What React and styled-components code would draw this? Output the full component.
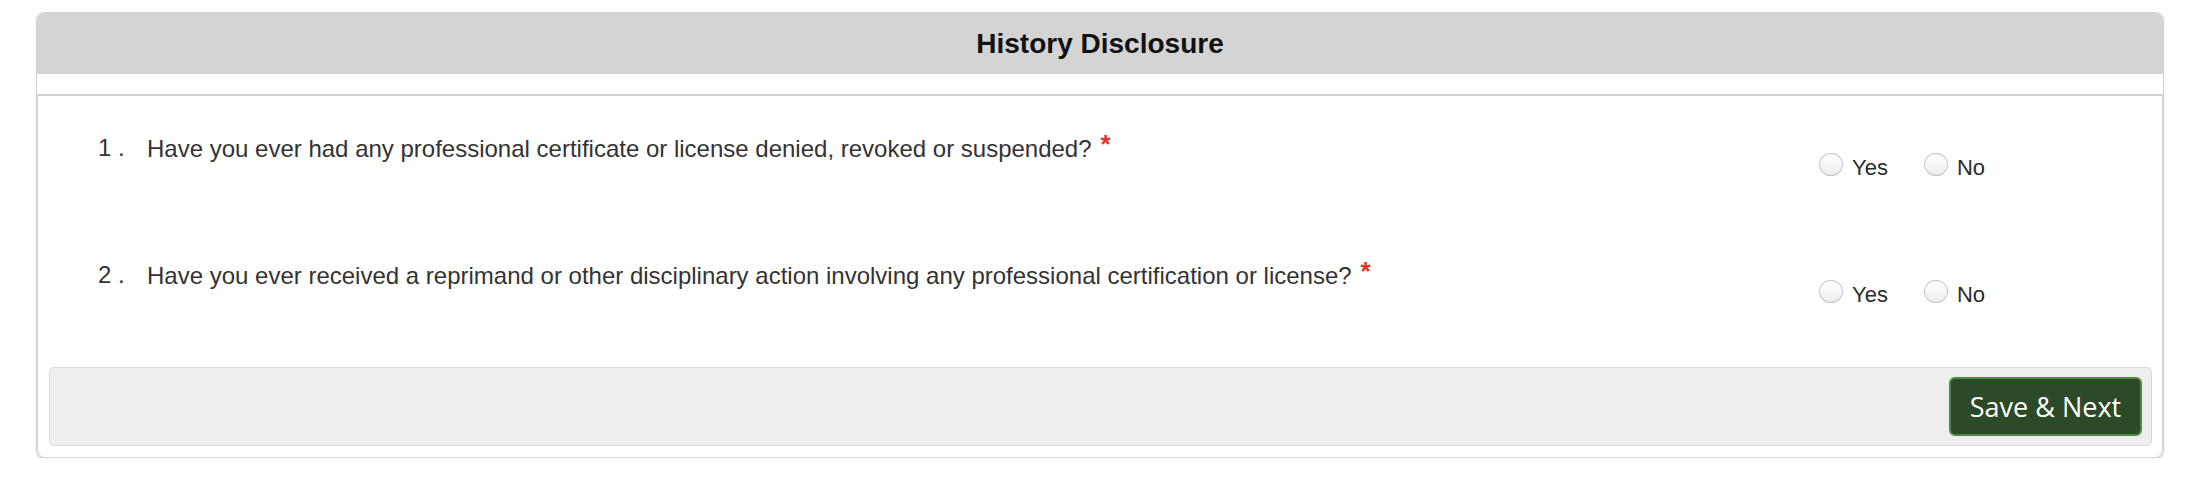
import React from 'react';
import styled, { createGlobalStyle } from 'styled-components';

const questions = [
  'Have you ever had any professional certificate or license denied, revoked or suspended?',
  'Have you ever received a reprimand or other disciplinary action involving any professional certification or license?',
];

export default function App() {
  return (
    <>
      <GlobalStyle />
      <Card>
        <Header>History Disclosure</Header>
        <Gap />
        <Body>
          {questions.map((q, i) => (
            <Row key={i}>
              <Number>{i + 1} .</Number>
              <Question>
                {q}
                <Required>*</Required>
              </Question>
              <Options>
                <Option>
                  <Radio type="radio" name={'q' + i} />
                  <span>Yes</span>
                </Option>
                <Option>
                  <Radio type="radio" name={'q' + i} />
                  <span>No</span>
                </Option>
              </Options>
            </Row>
          ))}
          <Footer>
            <SaveButton>Save &amp; Next</SaveButton>
          </Footer>
        </Body>
      </Card>
    </>
  );
}

//* Styled Components

const GlobalStyle = createGlobalStyle`
  body {
    margin: 0;
    background: #ffffff;
    font-family: "Liberation Sans", Arial, sans-serif;
  }
`;

const Card = styled.div`
  margin: 12px 34px 0 36px;
  border: 1px solid #d3d3d3;
  border-radius: 8px;
  box-shadow: 0 2px 2px rgba(0, 0, 0, 0.12);
  background: #fff;
  overflow: hidden;
`;

const Header = styled.div`
  height: 61px;
  display: flex;
  align-items: center;
  justify-content: center;
  background: #d5d4d5;
  color: #111;
  font-size: 28px;
  font-weight: bold;
`;

const Gap = styled.div`
  height: 20px;
`;

const Body = styled.div`
  border-top: 2px solid #cfcfcf;
  border-left: 1px solid #d6d6d6;
  border-right: 1px solid #d6d6d6;
  border-radius: 0 0 8px 8px;
  padding: 0 10px 11px 11px;
`;

const Row = styled.div`
  display: flex;
  align-items: flex-start;
  padding: 38px 0 42px 49px;
`;

const Number = styled.div`
  width: 49px;
  flex-shrink: 0;
  font-size: 24px;
  line-height: 28px;
  color: #333;
`;

const Question = styled.div`
  flex: 1;
  font-size: 24px;
  line-height: 28px;
  color: #333;
`;

const Required = styled.span`
  color: #e4332a;
  margin-left: 9px;
  font-size: 26px;
  font-weight: bold;
  position: relative;
  top: -4px;
`;

const Options = styled.div`
  width: 333px;
  flex-shrink: 0;
  display: flex;
  gap: 36px;
  margin-top: 21px;
`;

const Option = styled.label`
  display: flex;
  align-items: flex-start;
  gap: 9px;
  font-size: 22px;
  line-height: 26px;
  color: #2b2b2b;
`;

const Radio = styled.input`
  appearance: none;
  margin: -2px 0 0 0;
  width: 24px;
  height: 23px;
  border-radius: 50%;
  border: 1px solid #c4c4c4;
  background: linear-gradient(#ffffff, #ededed);
  box-shadow: inset 0 1px 1px rgba(255, 255, 255, 0.9);
`;

const Footer = styled.div`
  margin-top: 17px;
  display: flex;
  justify-content: flex-end;
  padding: 9px 9px;
  background: #eeeeee;
  border: 1px solid #d9d9d9;
  border-radius: 5px;
`;

const SaveButton = styled.button`
  width: 193px;
  height: 59px;
  background: #2c4a27;
  border: 2px solid #4e8a44;
  border-radius: 6px;
  color: #fff;
  font-family: "Open Sans", sans-serif;
  font-size: 27px;
  padding: 0;
`;
